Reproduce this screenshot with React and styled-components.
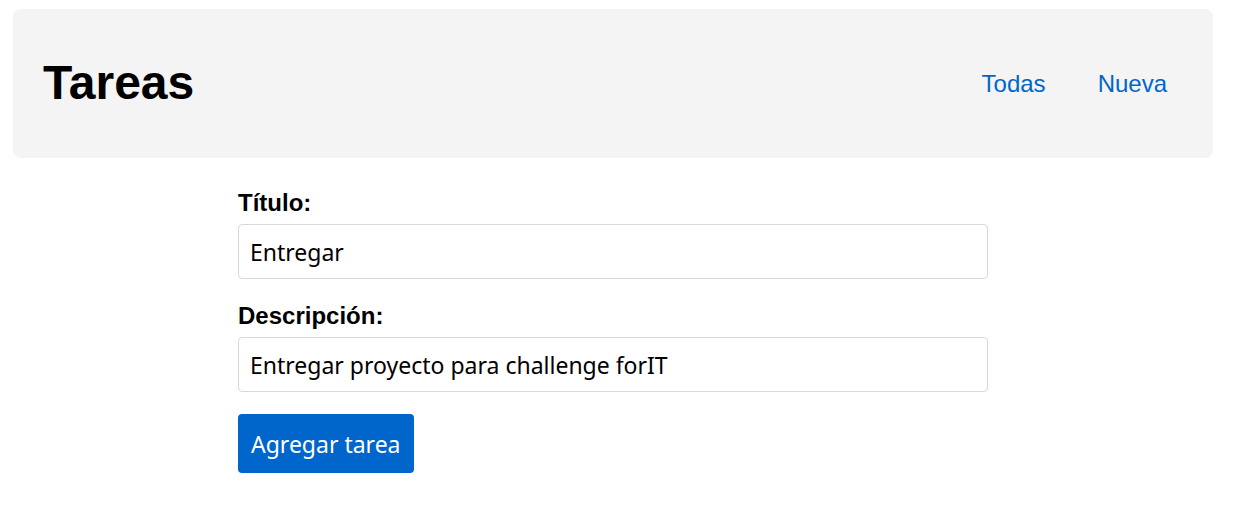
import React, { useState } from "react";
import styled, { createGlobalStyle } from "styled-components";

const GlobalStyle = createGlobalStyle`
  * { box-sizing: border-box; }
  body {
    margin: 0;
    padding: 9px 28px 24px 13px;
    background: #fff;
    color: #000;
    font-family: "Liberation Sans", Arial, sans-serif;
    font-size: 24px;
  }
`;

const Header = styled.header`
  display: flex;
  align-items: center;
  justify-content: space-between;
  padding: 46px 46px 47px 30px;
  border-radius: 8px;
  background: #f4f4f4;
`;

const Title = styled.h1`
  margin: 0;
  font-size: 48px;
  line-height: 56px;
`;

const Nav = styled.nav`
  display: flex;
  gap: 52px;
  padding-top: 2px;
`;

const NavLink = styled.a`
  color: #06c;
  text-decoration: none;
  line-height: 28px;
`;

const Form = styled.form`
  display: flex;
  flex-direction: column;
  align-items: flex-start;
  gap: 22px;
  max-width: 750px;
  margin: 30px auto 0;
`;

const Field = styled.div`
  display: flex;
  flex-direction: column;
  gap: 6px;
  width: 100%;
`;

const Label = styled.label`
  font-weight: bold;
  line-height: 30px;
`;

const Input = styled.input`
  width: 100%;
  height: 55px;
  padding: 12px 11px;
  border: 1px solid #d9d9d9;
  border-radius: 4px;
  background: #fff;
  color: #000;
  font-family: "Noto Sans", sans-serif;
  font-size: 23px;
  outline: none;
`;

const Button = styled.button`
  height: 59px;
  padding: 0 13px;
  border: 0;
  border-radius: 4px;
  background: #06c;
  color: #fff;
  font-family: "Noto Sans", sans-serif;
  font-size: 23px;
  cursor: pointer;
`;

export default function App() {
  const [title, setTitle] = useState("Entregar");
  const [description, setDescription] = useState("Entregar proyecto para challenge forIT");

  return (
    <>
      <GlobalStyle />
      <Header>
        <Title>Tareas</Title>
        <Nav>
          <NavLink href="#todas">Todas</NavLink>
          <NavLink href="#nueva">Nueva</NavLink>
        </Nav>
      </Header>
      <main>
        <Form onSubmit={(e) => e.preventDefault()}>
          <Field>
            <Label htmlFor="titulo">Título:</Label>
            <Input id="titulo" value={title} onChange={(e) => setTitle(e.target.value)} />
          </Field>
          <Field>
            <Label htmlFor="descripcion">Descripción:</Label>
            <Input
              id="descripcion"
              value={description}
              onChange={(e) => setDescription(e.target.value)}
            />
          </Field>
          <Button type="submit">Agregar tarea</Button>
        </Form>
      </main>
    </>
  );
}
